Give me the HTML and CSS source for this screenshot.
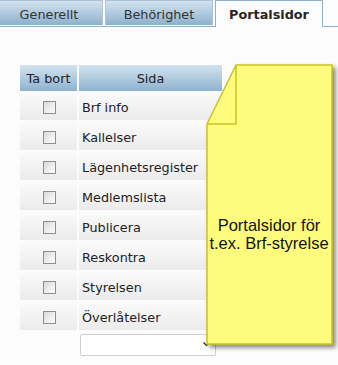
FILE: index.html
```html
<!DOCTYPE html>
<html lang="sv">
<head>
<meta charset="utf-8">
<title>Portalsidor</title>
<link rel="stylesheet" href="styles.css">
</head>
<body>
<div class="tabs">
  <div class="tab">Generellt</div>
  <div class="tab">Behörighet</div>
  <div class="tab active">Portalsidor</div>
</div>
<div class="content">
  <div class="grid">
    <div class="th">Ta bort</div>
    <div class="th">Sida</div>
    <div class="td chk"><input type="checkbox"></div><div class="td name">Brf info</div>
    <div class="td chk"><input type="checkbox"></div><div class="td name">Kallelser</div>
    <div class="td chk"><input type="checkbox"></div><div class="td name">Lägenhetsregister</div>
    <div class="td chk"><input type="checkbox"></div><div class="td name">Medlemslista</div>
    <div class="td chk"><input type="checkbox"></div><div class="td name">Publicera</div>
    <div class="td chk"><input type="checkbox"></div><div class="td name">Reskontra</div>
    <div class="td chk"><input type="checkbox"></div><div class="td name">Styrelsen</div>
    <div class="td chk"><input type="checkbox"></div><div class="td name">Överlåtelser</div>
    <div class="empty"></div>
    <div class="selcell">
      <div class="selwrap">
        <select class="sel"><option></option></select>
        <svg class="arrow" width="7" height="5" viewBox="0 0 7 5"><path d="M0.5 0.5 L3.5 3.5 L6.5 0.5" fill="none" stroke="#222" stroke-width="1.2"/></svg>
      </div>
    </div>
  </div>
  <div class="note">
    <svg class="note-shape" width="128" height="282" viewBox="0 0 128 282">
      <polygon points="1,60 30,1 126,1 126,280 1,280" fill="#fffc7d" stroke="#c9c31e" stroke-width="1.5" stroke-linejoin="miter"/>
      <polyline points="30,1 30,60 1,60" fill="none" stroke="#c9c31e" stroke-width="1.5"/>
    </svg>
    <div class="note-text">Portalsidor för<br>t.ex. Brf-styrelse</div>
  </div>
</div>
</body>
</html>
```

FILE: styles.css
```css
html, body {
  margin: 0;
  padding: 0;
  background: #fcfcfc;
}
body {
  font-family: "DejaVu Sans", Verdana, sans-serif;
  font-size: 12.8px;
  color: #222;
  width: 338px;
  height: 365px;
  overflow: hidden;
}
.tabs {
  display: flex;
  align-items: flex-end;
  gap: 2px;
  height: 26px;
  border-bottom: 1px solid #8db0cc;
  margin-left: -5px;
}
.tab {
  box-sizing: border-box;
  width: 108px;
  height: 25px;
  margin-bottom: 1px;
  border: 1px solid #a9c4da;
  border-bottom: none;
  background: linear-gradient(#d3e3ef, #8db0cc);
  color: #333;
  display: flex;
  align-items: center;
  justify-content: center;
  padding-top: 2px;
}
.tab.active {
  height: 27px;
  margin-bottom: -1px;
  border-color: #8db0cc;
  background: #fcfcfc;
  font-weight: bold;
  color: #2a2424;
  padding-top: 0;
}
.content {
  position: relative;
  padding: 38px 0 0 20px;
}
.grid {
  display: grid;
  grid-template-columns: 57px 143px;
  column-gap: 2px;
  grid-auto-rows: 30px;
  grid-template-rows: 26px;
}
.th {
  background: linear-gradient(#d4e4f0, #8eb2cf);
  display: flex;
  align-items: center;
  justify-content: center;
  color: #222;
}
.td {
  background: linear-gradient(#fbfbfb, #ebebeb);
  border-bottom: 1px solid #fcfcfc;
  display: flex;
  align-items: center;
  padding-top: 3px;
}
.chk {
  justify-content: center;
  padding-left: 1px;
}
.name {
  padding-left: 3px;
}
.chk input {
  appearance: none;
  -webkit-appearance: none;
  margin: 0;
  width: 13px;
  height: 13px;
  box-sizing: border-box;
  border: 1px solid #8e8e8e;
  background: linear-gradient(135deg, #d8d8d8, #f4f4f4 70%, #fafafa);
}
.empty {
  height: 0;
}
.selcell {
  padding: 3px 0 0 1px;
}
.selwrap {
  position: relative;
  width: 136px;
}
.sel {
  appearance: none;
  -webkit-appearance: none;
  box-sizing: border-box;
  width: 136px;
  height: 22px;
  border: 1px solid #cfcfcf;
  border-radius: 2px;
  background: #fff;
  display: block;
  margin: 0;
}
.arrow {
  position: absolute;
  left: 123px;
  top: 8px;
}
.note {
  position: absolute;
  left: 206px;
  top: 37px;
  width: 128px;
  height: 282px;
}
.note-shape {
  position: absolute;
  left: 0;
  top: 0;
  filter: drop-shadow(3px 3px 2px rgba(0, 0, 0, 0.45));
}
.note-text {
  position: relative;
  padding-top: 152px;
  text-align: center;
  font-family: "Liberation Sans", Arial, sans-serif;
  font-size: 16.5px;
  line-height: 18px;
  color: #111;
  width: 126px;
}
```
